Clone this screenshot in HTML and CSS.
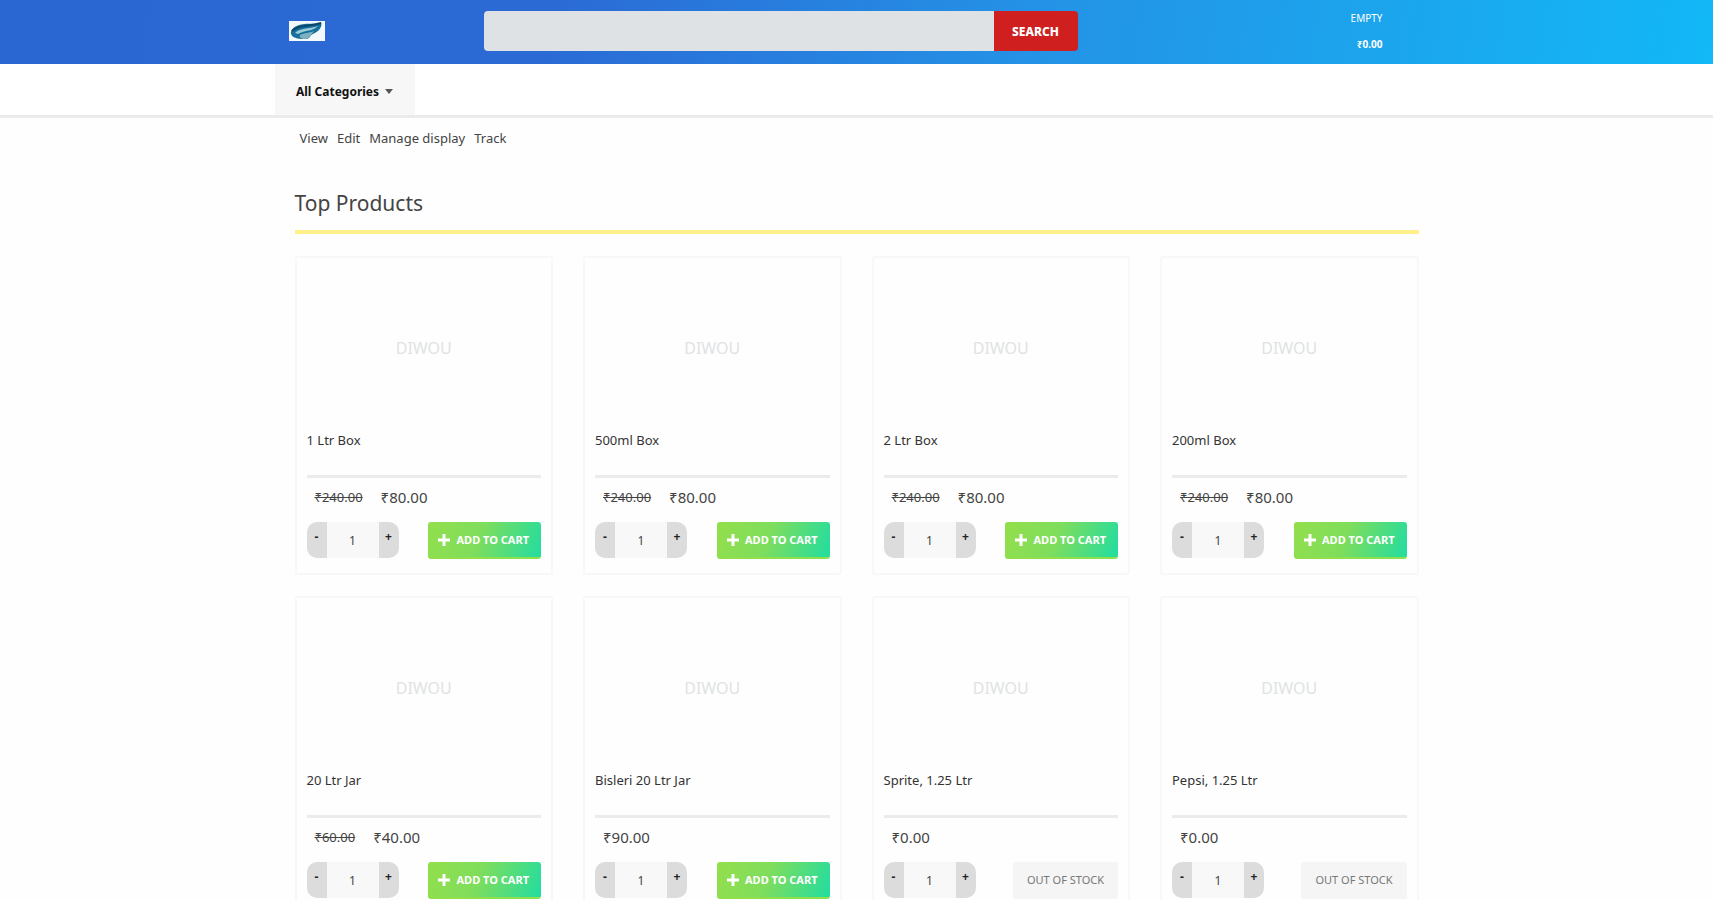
FILE: index.html
```html
<!DOCTYPE html>
<html lang="en">
<head>
    <meta charset="UTF-8">
    <meta name="viewport" content="width=device-width, initial-scale=1">
    <title>Top Products</title>
    <link rel="stylesheet" href="styles.css">
</head>
<body>
    <header class="header">
        <div class="container header-row">
            <a class="logo" href="#" aria-label="Home">
                <svg width="36" height="20" viewBox="0 0 36 20">
                    <rect width="36" height="20" fill="#f4fafc"/>
                    <path d="M2 13C1 8 7 4 15 3C22 2 29 4 32 1C34 6 29 11 24 13C21 14 21 18 17 18C12 18 4 18 2 13Z" fill="#176f9c"/>
                    <path d="M6 12C10 7 20 8 29 5C25 10 16 9 9 13Z" fill="#9ccbd6"/>
                    <path d="M11 14C17 11 22 12 25 10C22 14 20 18 16 18C12 18 10 16 11 14Z" fill="#7fb0c0"/>
                    <path d="M3 10C8 4 18 6 32 2" fill="none" stroke="#0c4668" stroke-width="2"/>
                </svg>
            </a>
            <form class="search">
                <input class="search-input" type="text" aria-label="Search products">
                <button class="search-button" type="submit">SEARCH</button>
            </form>
            <a class="cart" href="#">
                <span>EMPTY</span>
                <b>₹0.00</b>
            </a>
        </div>
    </header>

    <nav class="nav">
        <div class="container">
            <button class="categories" type="button">All Categories <span class="caret"></span></button>
        </div>
    </nav>

    <main class="container">
        <div class="tabs">
            <a href="#">View</a>
            <a href="#">Edit</a>
            <a href="#">Manage display</a>
            <a href="#">Track</a>
        </div>

        <h1 class="title">Top Products</h1>

        <div class="products">
            <article class="card">
                <div class="picture">DIWOU</div>
                <h2 class="name">1 Ltr Box</h2>
                <p class="price"><del>₹240.00</del><span>₹80.00</span></p>
                <form class="buy">
                    <div class="quantity">
                        <button type="button" aria-label="Less">-</button>
                        <input type="text" value="1" aria-label="Quantity">
                        <button type="button" aria-label="More">+</button>
                    </div>
                    <button class="add" type="button"><svg width="12" height="12" viewBox="0 0 12 12"><path d="M6 0V12M0 6H12" stroke="#fff" stroke-width="3"/></svg>ADD TO CART</button>
                </form>
            </article>
            <article class="card">
                <div class="picture">DIWOU</div>
                <h2 class="name">500ml Box</h2>
                <p class="price"><del>₹240.00</del><span>₹80.00</span></p>
                <form class="buy">
                    <div class="quantity">
                        <button type="button" aria-label="Less">-</button>
                        <input type="text" value="1" aria-label="Quantity">
                        <button type="button" aria-label="More">+</button>
                    </div>
                    <button class="add" type="button"><svg width="12" height="12" viewBox="0 0 12 12"><path d="M6 0V12M0 6H12" stroke="#fff" stroke-width="3"/></svg>ADD TO CART</button>
                </form>
            </article>
            <article class="card">
                <div class="picture">DIWOU</div>
                <h2 class="name">2 Ltr Box</h2>
                <p class="price"><del>₹240.00</del><span>₹80.00</span></p>
                <form class="buy">
                    <div class="quantity">
                        <button type="button" aria-label="Less">-</button>
                        <input type="text" value="1" aria-label="Quantity">
                        <button type="button" aria-label="More">+</button>
                    </div>
                    <button class="add" type="button"><svg width="12" height="12" viewBox="0 0 12 12"><path d="M6 0V12M0 6H12" stroke="#fff" stroke-width="3"/></svg>ADD TO CART</button>
                </form>
            </article>
            <article class="card">
                <div class="picture">DIWOU</div>
                <h2 class="name">200ml Box</h2>
                <p class="price"><del>₹240.00</del><span>₹80.00</span></p>
                <form class="buy">
                    <div class="quantity">
                        <button type="button" aria-label="Less">-</button>
                        <input type="text" value="1" aria-label="Quantity">
                        <button type="button" aria-label="More">+</button>
                    </div>
                    <button class="add" type="button"><svg width="12" height="12" viewBox="0 0 12 12"><path d="M6 0V12M0 6H12" stroke="#fff" stroke-width="3"/></svg>ADD TO CART</button>
                </form>
            </article>
            <article class="card">
                <div class="picture">DIWOU</div>
                <h2 class="name">20 Ltr Jar</h2>
                <p class="price"><del>₹60.00</del><span>₹40.00</span></p>
                <form class="buy">
                    <div class="quantity">
                        <button type="button" aria-label="Less">-</button>
                        <input type="text" value="1" aria-label="Quantity">
                        <button type="button" aria-label="More">+</button>
                    </div>
                    <button class="add" type="button"><svg width="12" height="12" viewBox="0 0 12 12"><path d="M6 0V12M0 6H12" stroke="#fff" stroke-width="3"/></svg>ADD TO CART</button>
                </form>
            </article>
            <article class="card">
                <div class="picture">DIWOU</div>
                <h2 class="name">Bisleri 20 Ltr Jar</h2>
                <p class="price"><span>₹90.00</span></p>
                <form class="buy">
                    <div class="quantity">
                        <button type="button" aria-label="Less">-</button>
                        <input type="text" value="1" aria-label="Quantity">
                        <button type="button" aria-label="More">+</button>
                    </div>
                    <button class="add" type="button"><svg width="12" height="12" viewBox="0 0 12 12"><path d="M6 0V12M0 6H12" stroke="#fff" stroke-width="3"/></svg>ADD TO CART</button>
                </form>
            </article>
            <article class="card">
                <div class="picture">DIWOU</div>
                <h2 class="name">Sprite, 1.25 Ltr</h2>
                <p class="price"><span>₹0.00</span></p>
                <form class="buy">
                    <div class="quantity">
                        <button type="button" aria-label="Less">-</button>
                        <input type="text" value="1" aria-label="Quantity">
                        <button type="button" aria-label="More">+</button>
                    </div>
                    <button class="add sold-out" type="button" disabled>OUT OF STOCK</button>
                </form>
            </article>
            <article class="card">
                <div class="picture">DIWOU</div>
                <h2 class="name">Pepsi, 1.25 Ltr</h2>
                <p class="price"><span>₹0.00</span></p>
                <form class="buy">
                    <div class="quantity">
                        <button type="button" aria-label="Less">-</button>
                        <input type="text" value="1" aria-label="Quantity">
                        <button type="button" aria-label="More">+</button>
                    </div>
                    <button class="add sold-out" type="button" disabled>OUT OF STOCK</button>
                </form>
            </article>
        </div>
    </main>
</body>
</html>
```
FILE: styles.css
```css
* {
    box-sizing: border-box;
}

body {
    margin: 0;
    background-color: #fefefe;
    color: #444;
    font-family: "Noto Sans", "Open Sans", sans-serif;
    font-size: 13px;
}

a {
    color: inherit;
    text-decoration: none;
}

button,
input {
    border: 0;
    font-family: inherit;
    font-size: 12px;
}

.container {
    max-width: 1164px;
    margin: 0 auto;
    padding: 0 20px;
}

/* header */
.header {
    padding-bottom: 2px;
    background: linear-gradient(100deg, #2b67d3 0%, #2b6ad5 32%, #2492e6 60%, #1aa8ee 84%, #12b8f7 100%);
}

.header-row {
    display: grid;
    grid-template-columns: 189px 594px 1fr;
    align-items: center;
    height: 62px;
}

.logo {
    margin-left: -6px;
}

.logo svg {
    display: block;
}

.search {
    display: flex;
    height: 40px;
}

.search-input {
    flex: 1;
    min-width: 0;
    padding: 0 12px;
    background-color: #dee2e5;
    border-radius: 4px 0 0 4px;
}

.search-button {
    width: 84px;
    background-color: #cf1f1f;
    border-radius: 0 4px 4px 0;
    color: #fff;
    font-weight: 800;
}

.cart {
    display: flex;
    flex-direction: column;
    align-items: flex-end;
    gap: 12px;
    padding-right: 36px;
    color: #fff;
    font-size: 10px;
    line-height: 14px;
}

/* category bar */
.nav {
    background-color: #fff;
    border-bottom: 3px solid #ebebeb;
}

.categories {
    display: flex;
    align-items: center;
    justify-content: center;
    gap: 6px;
    width: 140px;
    height: 51px;
    margin-left: -20px;
    padding: 4px 0 0;
    background-color: #f7f7f7;
    color: #111;
    font-weight: 700;
}

.caret {
    border: 4px solid transparent;
    border-top: 5px solid #555;
    border-bottom: 0;
}

/* page */
.tabs {
    display: flex;
    gap: 9px;
    padding: 12px 5px;
    line-height: 16px;
}

.title {
    margin: 30px 0 22px;
    padding-bottom: 12px;
    border-bottom: 4px solid #fff08a;
    color: #444;
    font-size: 21px;
    font-weight: 400;
    line-height: 30px;
}

.products {
    display: grid;
    grid-template-columns: repeat(4, 1fr);
    gap: 21px 30px;
    padding-bottom: 22px;
}

.card {
    padding: 10px 10px 14px;
    border: 2px solid #f8f8f8;
    border-radius: 3px;
}

.picture {
    display: flex;
    align-items: center;
    justify-content: center;
    height: 160px;
    color: #dfe3e3;
    font-size: 16px;
}

.name {
    height: 50px;
    margin: 0;
    padding-top: 2px;
    border-bottom: 3px solid #ebebeb;
    color: #333;
    font-size: 13px;
    font-weight: 400;
    line-height: 20px;
}

.price {
    display: flex;
    align-items: center;
    gap: 18px;
    height: 44px;
    margin: 0;
    padding: 0 0 6px 8px;
    font-size: 15px;
}

.price del {
    font-size: 13px;
}

.buy {
    display: flex;
    justify-content: space-between;
}

.quantity {
    display: flex;
    height: 36px;
    overflow: hidden;
    border-radius: 10px;
}

.quantity button {
    width: 20px;
    padding: 0 0 8px;
    background-color: #dcdcdc;
    color: #222;
    font-weight: 700;
}

.quantity input {
    width: 52px;
    padding: 0;
    background-color: #f8f8f8;
    color: #444;
    text-align: center;
}

.add {
    display: flex;
    align-items: center;
    gap: 6px;
    height: 37px;
    padding: 0 12px 0 10px;
    background: linear-gradient(110deg, #93df4c 0%, #7fdd5c 45%, #22dda0 100%);
    border-bottom: 2px solid #8fe04a;
    border-radius: 3px;
    color: #fff;
    font-size: 11px;
    font-weight: 700;
}

.sold-out {
    padding: 0 14px;
    background: #f5f5f5;
    border-color: #f5f5f5;
    color: #777;
    font-weight: 400;
}
```
